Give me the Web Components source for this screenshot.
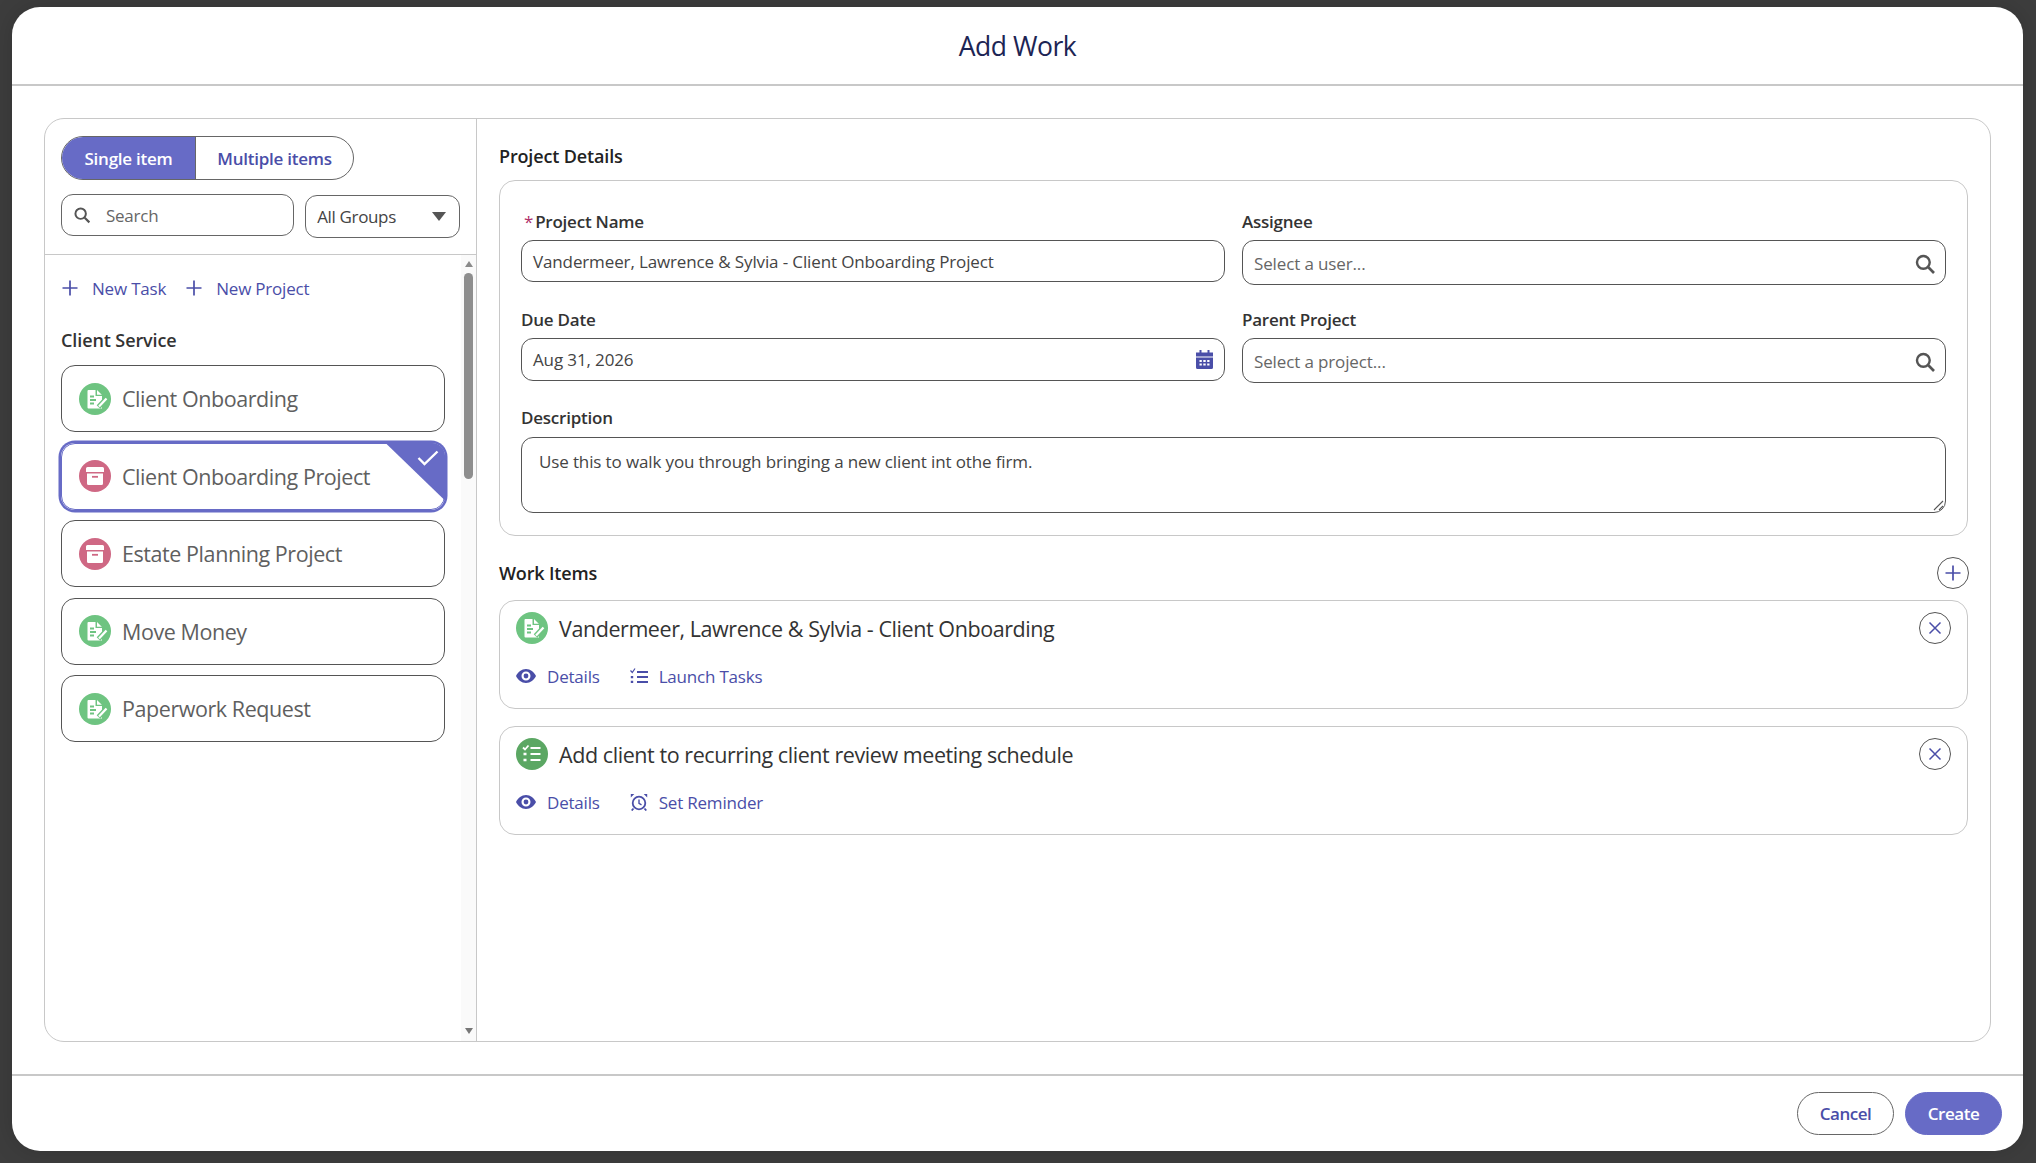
<!DOCTYPE html>
<html lang="en">
<head>
<meta charset="utf-8">
<title>Add Work</title>
<style>
    html, body { margin: 0; height: 100%; }
    body {
        background-color: #3d3d3d;
        font-family: "Open Sans", "Liberation Sans", sans-serif;
        overflow: hidden;
    }
</style>
</head>
<body>
<add-work-dialog></add-work-dialog>

<script>
const ICONS = {
    doc: `<svg viewBox="0 0 32 32" width="32" height="32">
        <circle cx="16" cy="16" r="16" fill="#6ec481"/>
        <path d="M9.500 7h7v6h6.500v12.500h-13.500a1 1 0 0 1-1-1v-16.500a1 1 0 0 1 1-1z" fill="#fff"/>
        <path d="M18 7l4.800 4.800h-4.800z" fill="#fff"/>
        <path d="M11 13.500h4M11 17h6M11 20.500h4" stroke="#6ec481" stroke-width="1.800"/>
        <path d="M19.500 24l8-8.500" stroke="#6ec481" stroke-width="5"/>
        <path d="M20 23.500l7.500-8" stroke="#fff" stroke-width="2.200"/>
    </svg>`,
    box: `<svg viewBox="0 0 32 32" width="32" height="32">
        <circle cx="16" cy="16" r="16" fill="#cf6884"/>
        <path d="M8.500 7h15a1.500 1.500 0 0 1 1.500 1.500v3.500h-18v-3.500a1.500 1.500 0 0 1 1.500-1.500z" fill="#fff"/>
        <path d="M8 13.500h16v10a1.500 1.500 0 0 1-1.500 1.500h-13a1.500 1.500 0 0 1-1.500-1.500z" fill="#fff"/>
        <path d="M13 16.800h6" stroke="#cf6884" stroke-width="1.800"/>
    </svg>`,
    list: `<svg viewBox="0 0 32 32" width="32" height="32">
        <circle cx="16" cy="16" r="16" fill="#5ba763"/>
        <path d="M7 9.500l2 2 3.500-4" fill="none" stroke="#fff" stroke-width="1.800"/>
        <path d="M14.500 10h10M14.500 16h10M14.500 22h10" stroke="#fff" stroke-width="2.200"/>
        <path d="M7.500 16h3M7.500 22h3" stroke="#fff" stroke-width="2.600"/>
    </svg>`,
    plus: `<svg viewBox="0 0 18 18" width="18" height="18"><path d="M9 1.500v15M1.500 9h15" stroke="currentColor" stroke-width="1.700"/></svg>`,
    search: `<svg viewBox="0 0 20 20" width="20" height="20"><circle cx="8.500" cy="8.500" r="5.800" fill="none" stroke="currentColor" stroke-width="2.200"/><path d="M13 13l5.200 5.200" stroke="currentColor" stroke-width="2.400"/></svg>`,
    calendar: `<svg viewBox="0 0 17 19" width="17" height="19"><path d="M3.500 0h2v2.500h6v-2.500h2v2.500h3.500v4h-17v-4h3.500z" fill="currentColor"/><path fill-rule="evenodd" d="M0 7.500h17v10a1.500 1.500 0 0 1-1.500 1.500h-14a1.500 1.500 0 0 1-1.500-1.500zM3.500 10v2h2.300v-2zM7.300 10v2h2.400v-2zM11.200 10v2h2.300v-2zM3.500 13.500v2h2.300v-2zM7.300 13.500v2h2.400v-2zM11.200 13.500v2h2.300v-2z" fill="currentColor"/></svg>`,
    eye: `<svg viewBox="0 0 20 14" width="20" height="14"><path fill-rule="evenodd" d="M10 0c4.500 0 8 3 10 7-2 4-5.500 7-10 7S2 11 0 7c2-4 5.500-7 10-7zm0 2.500a4.500 4.500 0 1 0 0 9 4.500 4.500 0 0 0 0-9z" fill="currentColor"/><circle cx="10" cy="7" r="2.400" fill="currentColor"/></svg>`,
    tasks: `<svg viewBox="0 0 18 16" width="18" height="16"><path d="M.5 2.500l1.800 2 2.700-4" fill="none" stroke="currentColor" stroke-width="1.200"/><path d="M7 4h11M7 9h11M7 14h11" stroke="currentColor" stroke-width="1.900"/><path d="M2 8v2.200M2 12.800v2.200" stroke="currentColor" stroke-width="2.400"/></svg>`,
    alarm: `<svg viewBox="0 0 18 18" width="18" height="18"><circle cx="9" cy="10" r="6.300" fill="none" stroke="currentColor" stroke-width="1.800"/><path d="M9 6.500v3.800l2.500 1.500" fill="none" stroke="currentColor" stroke-width="1.400"/><path d="M.8 4.500v-3.500h3.500zM17.200 4.500v-3.500h-3.500z" fill="currentColor"/><path d="M3.500 15.500l-1.800 2M14.500 15.500l1.800 2" stroke="currentColor" stroke-width="1.800"/></svg>`,
    close: `<svg viewBox="0 0 14 14" width="14" height="14"><path d="M1.500 1.500l11 11M12.500 1.500l-11 11" stroke="currentColor" stroke-width="1.500"/></svg>`
};

class AppIcon extends HTMLElement {
    connectedCallback() {
        this.attachShadow({mode: 'open'}).innerHTML = `
        <style>
            :host { display: inline-flex; flex: none; }
            svg { display: block; }
        </style>
        ${ICONS[this.getAttribute('name')]}`;
        const size = this.getAttribute('size');
        if (size) {
            const svg = this.shadowRoot.querySelector('svg');
            svg.setAttribute('width', size);
            svg.setAttribute('height', size);
        }
    }
}
customElements.define('app-icon', AppIcon);

class ModeToggle extends HTMLElement {
    constructor() {
        super();
        this.attachShadow({mode: 'open'}).innerHTML = `
        <style>
            :host {
                display: flex;
                width: 293px;
                height: 44px;
                box-sizing: border-box;
                border: 1px solid #666;
                border-radius: 22px;
                overflow: hidden;
                font-size: 17px;
                font-weight: 600;
                letter-spacing: -0.25px;
            }
            div { display: flex; align-items: center; justify-content: center; padding-top: 1px; }
            .on { width: 133px; background-color: #676bc6; color: #fff; border-right: 1px solid #666; }
            .off { flex: 1; color: #4a4ea8; }
        </style>
        <div class="on">Single item</div>
        <div class="off">Multiple items</div>`;
    }
}
customElements.define('mode-toggle', ModeToggle);

class SearchBox extends HTMLElement {
    constructor() {
        super();
        this.attachShadow({mode: 'open'}).innerHTML = `
        <style>
            :host {
                display: flex;
                align-items: center;
                gap: 15px;
                width: 233px;
                height: 42px;
                box-sizing: border-box;
                padding: 0 12px 0 11px;
                border: 1px solid #666;
                border-radius: 12px;
                color: #666;
                font-size: 17px;
                letter-spacing: -0.25px;
            }
            app-icon { color: #555; }
        </style>
        <app-icon name="search" size="18"></app-icon><slot></slot>`;
    }
}
customElements.define('search-box', SearchBox);

class GroupSelect extends HTMLElement {
    constructor() {
        super();
        this.attachShadow({mode: 'open'}).innerHTML = `
        <style>
            :host {
                display: flex;
                align-items: center;
                justify-content: space-between;
                width: 155px;
                height: 43px;
                margin-top: 1px;
                box-sizing: border-box;
                padding: 0 13px 0 11px;
                border: 1px solid #666;
                border-radius: 12px;
                color: #444;
                font-size: 17px;
                letter-spacing: -0.35px;
            }
            i { width: 0; height: 0; border: 7px solid transparent; border-top: 9px solid #555; border-bottom: 0; }
        </style>
        <slot></slot><i></i>`;
    }
}
customElements.define('group-select', GroupSelect);

class LinkAction extends HTMLElement {
    constructor() {
        super();
        this.attachShadow({mode: 'open'}).innerHTML = `
        <style>
            :host {
                display: inline-flex;
                align-items: center;
                color: #4a4ea8;
                font-size: 17px;
                font-weight: 500;
                letter-spacing: -0.2px;
                white-space: nowrap;
            }
            ::slotted(app-icon) { margin-right: var(--icon-gap, 11px); }
        </style>
        <slot name="icon"></slot><slot></slot>`;
    }
}
customElements.define('link-action', LinkAction);

class TemplateCard extends HTMLElement {
    connectedCallback() {
        const picked = this.hasAttribute('selected');
        this.attachShadow({mode: 'open'}).innerHTML = `
        <style>
            :host {
                display: flex;
                align-items: center;
                gap: 11px;
                position: relative;
                height: 67px;
                box-sizing: border-box;
                padding: 0 17px;
                border: 1px solid #555;
                border-radius: 14px;
                color: #5f5f5f;
                font-size: 21.500px;
                letter-spacing: -0.43px;
            }
            :host([selected]) {
                border-color: #676bc6;
                box-shadow: 0 0 0 2.500px #676bc6;
            }
            .corner {
                position: absolute;
                top: -1px;
                right: -1px;
                width: 60px;
                height: 58px;
                background-color: #676bc6;
                clip-path: polygon(0 0, 100% 0, 100% 100%);
                border-top-right-radius: 13px;
            }
            .corner svg { position: absolute; top: 7px; right: 6px; }
        </style>
        <app-icon name="${this.getAttribute('icon')}"></app-icon>
        <slot></slot>
        ${picked ? `<div class="corner"><svg viewBox="0 0 22 16" width="22" height="16"><path d="M1.500 8l6 6 13-12.500" fill="none" stroke="#fff" stroke-width="2.400"/></svg></div>` : ''}`;
    }
}
customElements.define('template-card', TemplateCard);

class TemplatePane extends HTMLElement {
    constructor() {
        super();
        this.attachShadow({mode: 'open'}).innerHTML = `
        <style>
            :host {
                display: flex;
                flex-direction: column;
                min-height: 0;
                border-right: 1px solid #c8c8c8;
            }
            .top {
                height: 136px;
                box-sizing: border-box;
                padding: 17px 16px 0;
                border-bottom: 1px solid #c8c8c8;
            }
            .filters { display: flex; gap: 11.500px; margin-top: 14px; }
            .body { flex: 1; display: flex; min-height: 0; }
            .list { flex: 1; padding: 22px 16px 0 16px; }
            .new { display: flex; gap: 19px; height: 22px; align-items: center; }
            .new link-action { --icon-gap: 13px; }
            h3 {
                margin: 29px 0 13px;
                height: 24px;
                line-height: 24px;
                font-size: 18px;
                font-weight: 600;
                color: #333;
                letter-spacing: -0.1px;
            }
            .cards { display: flex; flex-direction: column; gap: 10.500px; }
            .scroll {
                width: 15px;
                display: flex;
                flex-direction: column;
                align-items: center;
                background-color: #fafafa;
            }
            .scroll i {
                width: 0; height: 0;
                border: 4.500px solid transparent;
            }
            .up { border-bottom: 6px solid #8a8a8a !important; border-top: 0 !important; margin-top: 6px; }
            .down { border-top: 6px solid #777 !important; border-bottom: 0 !important; margin: auto 0 7px; }
            .thumb {
                width: 9px;
                height: 206px;
                margin-top: 6px;
                border-radius: 5px;
                background-color: #8e8e8e;
            }
        </style>
        <div class="top">
            <mode-toggle></mode-toggle>
            <div class="filters">
                <search-box>Search</search-box>
                <group-select>All Groups</group-select>
            </div>
        </div>
        <div class="body">
            <div class="list">
                <div class="new">
                    <link-action><app-icon slot="icon" name="plus"></app-icon>New Task</link-action>
                    <link-action><app-icon slot="icon" name="plus"></app-icon>New Project</link-action>
                </div>
                <h3>Client Service</h3>
                <div class="cards">
                    <template-card icon="doc">Client Onboarding</template-card>
                    <template-card icon="box" selected>Client Onboarding Project</template-card>
                    <template-card icon="box">Estate Planning Project</template-card>
                    <template-card icon="doc">Move Money</template-card>
                    <template-card icon="doc">Paperwork Request</template-card>
                </div>
            </div>
            <div class="scroll">
                <i class="up"></i>
                <div class="thumb"></div>
                <i class="down"></i>
            </div>
        </div>`;
    }
}
customElements.define('template-pane', TemplatePane);

class FormField extends HTMLElement {
    connectedCallback() {
        const required = this.hasAttribute('required');
        const icon = this.getAttribute('icon');
        const h = this.getAttribute('height') || 42;
        const grip = this.hasAttribute('grip');
        const placeholder = this.hasAttribute('placeholder');
        this.attachShadow({mode: 'open'}).innerHTML = `
        <style>
            :host { display: block; font-size: 17px; letter-spacing: -0.13px; }
            label {
                display: block;
                height: 24px;
                line-height: 24px;
                margin-bottom: var(--label-gap, 6px);
                font-weight: 600;
                letter-spacing: -0.23px;
                color: #333;
            }
            b { color: #b0306a; font-weight: 400; margin: 0 2px 0 3px; }
            .box {
                display: flex;
                justify-content: space-between;
                position: relative;
                height: ${h}px;
                box-sizing: border-box;
                padding: ${placeholder ? 2 : 0}px ${icon === 'calendar' ? 11 : 9}px 0 11px;
                border: 1px solid #555;
                border-radius: 12px;
                align-items: ${grip ? 'flex-start' : 'center'};
                color: ${placeholder ? '#666' : '#444'};
            }
            .grip { position: absolute; right: 1px; bottom: 1px; }
            :host([grip]) .box { padding: 12px 17px; }
            .calendar { color: #4a4ea8; }
            .search { color: #555; }
        </style>
        <label>${required ? '<b>*</b>' : ''}${this.getAttribute('label')}</label>
        <div class="box">
            <span><slot></slot></span>
            ${icon ? `<app-icon class="${icon}" name="${icon}"${icon === 'search' ? ' size="22"' : ''}></app-icon>` : ''}
            ${grip ? `<svg class="grip" viewBox="0 0 12 12" width="12" height="12"><path d="M2 11l9-9M7 11l4-4" stroke="#555" stroke-width="1.100"/></svg>` : ''}
        </div>`;
    }
}
customElements.define('form-field', FormField);

class RoundButton extends HTMLElement {
    connectedCallback() {
        this.attachShadow({mode: 'open'}).innerHTML = `
        <style>
            :host {
                display: flex;
                align-items: center;
                justify-content: center;
                flex: none;
                width: 32px;
                height: 32px;
                box-sizing: border-box;
                border: 1px solid #555;
                border-radius: 50%;
                color: #4a4ea8;
            }
        </style>
        <app-icon name="${this.getAttribute('icon')}"></app-icon>`;
    }
}
customElements.define('round-button', RoundButton);

class WorkItem extends HTMLElement {
    connectedCallback() {
        this.attachShadow({mode: 'open'}).innerHTML = `
        <style>
            :host {
                display: block;
                box-sizing: border-box;
                padding: 11px 16px 0;
                border: 1px solid #c8c8c8;
                border-radius: 16px;
            }
            .head { display: flex; align-items: center; gap: 11px; height: 32px; color: #333; font-size: 21.500px; letter-spacing: -0.43px; }
            .head span { flex: 1; }
            .actions { display: flex; gap: 30px; margin-top: 21px; height: 22px; align-items: center; }
        </style>
        <div class="head">
            <app-icon name="${this.getAttribute('icon')}"></app-icon>
            <span><slot name="title"></slot></span>
            <round-button icon="close"></round-button>
        </div>
        <div class="actions"><slot></slot></div>`;
    }
}
customElements.define('work-item', WorkItem);

class DetailPane extends HTMLElement {
    constructor() {
        super();
        this.attachShadow({mode: 'open'}).innerHTML = `
        <style>
            :host { display: block; padding: 24px 22px 0 22px; min-width: 0; }
            h3 {
                margin: 0;
                height: 26px;
                line-height: 26px;
                font-size: 18px;
                font-weight: 600;
                color: #222;
                letter-spacing: -0.15px;
            }
            .card {
                margin-top: 11px;
                height: 356px;
                box-sizing: border-box;
                padding: 29px 22px 0 21px;
                border: 1px solid #c8c8c8;
                border-radius: 16px;
                display: grid;
                grid-template-columns: 704px 704px;
                column-gap: 17px;
                grid-template-rows: 73px 73px auto;
                row-gap: 25px;
            }
            .wide { grid-column: 1 / 3; --label-gap: 7px; }
            .items-head {
                display: flex;
                justify-content: space-between;
                align-items: center;
                margin-top: 21px;
                height: 32px;
            }
            .items-head round-button { margin-right: -1px; }
            .items { display: flex; flex-direction: column; gap: 17px; margin-top: 11px; }
            work-item { height: 109px; }
        </style>
        <h3>Project Details</h3>
        <div class="card">
            <form-field label="Project Name" required>Vandermeer, Lawrence &amp; Sylvia - Client Onboarding Project</form-field>
            <form-field label="Assignee" icon="search" height="45" placeholder>Select a user...</form-field>
            <form-field label="Due Date" icon="calendar" height="43">Aug 31, 2026</form-field>
            <form-field label="Parent Project" icon="search" height="45" placeholder>Select a project...</form-field>
            <form-field class="wide" label="Description" height="76" grip>Use this to walk you through bringing a new client int othe firm.</form-field>
        </div>
        <div class="items-head">
            <h3>Work Items</h3>
            <round-button icon="plus"></round-button>
        </div>
        <div class="items">
            <work-item icon="doc">
                <span slot="title">Vandermeer, Lawrence &amp; Sylvia - Client Onboarding</span>
                <link-action><app-icon slot="icon" name="eye"></app-icon>Details</link-action>
                <link-action><app-icon slot="icon" name="tasks"></app-icon>Launch Tasks</link-action>
            </work-item>
            <work-item icon="list">
                <span slot="title">Add client to recurring client review meeting schedule</span>
                <link-action><app-icon slot="icon" name="eye"></app-icon>Details</link-action>
                <link-action><app-icon slot="icon" name="alarm"></app-icon>Set Reminder</link-action>
            </work-item>
        </div>`;
    }
}
customElements.define('detail-pane', DetailPane);

class PillButton extends HTMLElement {
    constructor() {
        super();
        this.attachShadow({mode: 'open'}).innerHTML = `
        <style>
            :host {
                display: flex;
                align-items: center;
                justify-content: center;
                width: 97px;
                height: 43px;
                box-sizing: border-box;
                border: 1px solid #666;
                border-radius: 22px;
                color: #4a4ea8;
                font-size: 17px;
                font-weight: 600;
                letter-spacing: -0.45px;
            }
            :host([primary]) { background-color: #676bc6; border-color: #676bc6; color: #fff; }
        </style>
        <slot></slot>`;
    }
}
customElements.define('pill-button', PillButton);

class AddWorkDialog extends HTMLElement {
    constructor() {
        super();
        this.attachShadow({mode: 'open'}).innerHTML = `
        <style>
            :host {
                display: flex;
                flex-direction: column;
                width: 2011px;
                height: 1144px;
                margin: 7px 0 0 12px;
                background-color: #fff;
                border-radius: 28px;
                box-shadow: 0 0 24px rgba(0, 0, 0, .15);
            }
            header {
                height: 76px;
                padding-top: 1px;
                display: flex;
                align-items: center;
                justify-content: center;
                border-bottom: 2px solid #c8c8c8;
                font-size: 26.500px;
                letter-spacing: -0.45px;
                color: #1d2554;
            }
            main { flex: 1; min-height: 0; padding: 32px; }
            .panel {
                height: 100%;
                box-sizing: border-box;
                display: grid;
                grid-template-columns: 432px 1fr;
                border: 1px solid #c8c8c8;
                border-radius: 20px;
                overflow: hidden;
            }
            footer {
                height: 77px;
                display: flex;
                justify-content: flex-end;
                gap: 11px;
                box-sizing: border-box;
                padding: 16px 21px 0 0;
                border-top: 2px solid #c8c8c8;
            }
        </style>
        <header>Add Work</header>
        <main>
            <div class="panel">
                <template-pane></template-pane>
                <detail-pane></detail-pane>
            </div>
        </main>
        <footer>
            <pill-button>Cancel</pill-button>
            <pill-button primary>Create</pill-button>
        </footer>`;
    }
}
customElements.define('add-work-dialog', AddWorkDialog);
</script>
</body>
</html>
